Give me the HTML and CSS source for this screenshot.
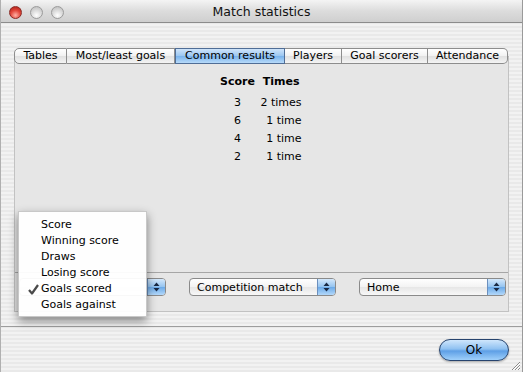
FILE: index.html
```html
<!DOCTYPE html>
<html lang="en">
<head>
    <meta charset="UTF-8">
    <title>Match statistics</title>
    <link rel="stylesheet" href="styles.css">
</head>
<body>
    <div class="window">
        <div class="titlebar">
            <div class="lights">
                <span class="light close"></span>
                <span class="light"></span>
                <span class="light"></span>
            </div>
            <div class="title">Match statistics</div>
        </div>

        <div class="content">
            <div class="tabs">
                <div class="tab" style="width:53px">Tables</div>
                <div class="tab" style="width:108px">Most/least goals</div>
                <div class="tab selected" style="width:110px">Common results</div>
                <div class="tab" style="width:57px">Players</div>
                <div class="tab" style="width:86px">Goal scorers</div>
                <div class="tab last" style="width:80px">Attendance</div>
            </div>

            <div class="pane">
                <div class="results">
                    <div class="grid">
                        <div class="head score">Score</div>
                        <div class="head times">Times</div>
                        <div class="score">3</div><div class="times">2 times</div>
                        <div class="score">6</div><div class="times">1 time</div>
                        <div class="score">4</div><div class="times">1 time</div>
                        <div class="score">2</div><div class="times">1 time</div>
                    </div>
                </div>
                <div class="filters">
                    <div class="popup"><span class="value covered">Goals scored</span><span class="arrows"><svg width="7" height="10" viewBox="0 0 7 10"><path d="M3.5 0.5 L6.5 4 L0.5 4 Z M0.5 6 L6.5 6 L3.5 9.5 Z" fill="#1a2a44"/></svg></span></div>
                    <div class="popup"><span class="value">Competition match</span><span class="arrows"><svg width="7" height="10" viewBox="0 0 7 10"><path d="M3.5 0.5 L6.5 4 L0.5 4 Z M0.5 6 L6.5 6 L3.5 9.5 Z" fill="#1a2a44"/></svg></span></div>
                    <div class="popup"><span class="value">Home</span><span class="arrows"><svg width="7" height="10" viewBox="0 0 7 10"><path d="M3.5 0.5 L6.5 4 L0.5 4 Z M0.5 6 L6.5 6 L3.5 9.5 Z" fill="#1a2a44"/></svg></span></div>
                </div>
            </div>
        </div>

        <div class="footer">
            <button class="ok">Ok</button>
            <svg class="grip" width="11" height="11" viewBox="0 0 11 11">
                <path d="M10 2 L2 10 M10 5 L5 10 M10 8 L8 10" stroke="#8a8a8a" stroke-width="1"/>
                <path d="M10 3 L3 10 M10 6 L6 10 M10 9 L9 10" stroke="#ffffff" stroke-width="1"/>
            </svg>
        </div>

        <div class="menu">
            <div class="item">Score</div>
            <div class="item">Winning score</div>
            <div class="item">Draws</div>
            <div class="item">Losing score</div>
            <div class="item checked">
                <svg class="check" width="11" height="11" viewBox="0 0 11 11"><path d="M1 6 L4 9.5 L10 1" fill="none" stroke="#4a4a4a" stroke-width="2.2" stroke-linejoin="round"/></svg>
                Goals scored
            </div>
            <div class="item">Goals against</div>
        </div>
    </div>
</body>
</html>
```

FILE: styles.css
```css
:root {
    --ui-font: "DejaVu Sans", "Liberation Sans", sans-serif;
    --pane-color: #e6e6e6;
    --line-color: #a6a6a6;
}

body {
    margin: 0;
    font-family: var(--ui-font);
    color: #000;
}

.window {
    position: relative;
    width: 523px;
    height: 372px;
    box-sizing: border-box;
    border-right: 1px solid #9a9a9a;
    border-left: 1px solid #b0b0b0;
    background: repeating-linear-gradient(to bottom, #f2f2f2 0, #f2f2f2 2px, #e9e9e9 2px, #e9e9e9 4px);
    display: flex;
    flex-direction: column;
    overflow: hidden;
}

.titlebar {
    height: 22px;
    border-bottom: 1px solid #8c8c8c;
    background: linear-gradient(to bottom, #f4f4f4 0%, #dcdcdc 50%, #cfcfcf 100%);
    border-radius: 5px 5px 0 0;
    position: relative;
    display: flex;
    align-items: center;
    justify-content: center;
}

.lights {
    position: absolute;
    left: 8px;
    top: 6px;
    display: flex;
    gap: 8px;
}

.light {
    width: 13px;
    height: 13px;
    border-radius: 50%;
    box-sizing: border-box;
    border: 1px solid #9b9b9b;
    background: radial-gradient(circle at 50% 75%, #ffffff 0%, #dedede 45%, #b8b8b8 100%);
}

.light.close {
    border-color: #8a2a25;
    background: radial-gradient(circle at 50% 75%, #ffb1a6 0%, #e2463a 50%, #a51b12 100%);
}

.title {
    font-size: 12.5px;
    color: #111;
    padding-top: 1px;
}

.content {
    padding: 25px 13px 0 13px;
}

.tabs {
    position: relative;
    z-index: 1;
    display: flex;
    height: 16px;
}

.tab {
    box-sizing: border-box;
    height: 16px;
    font-size: 11px;
    line-height: 14px;
    text-align: center;
    border: 1px solid #8d8d8d;
    border-left: none;
    background: linear-gradient(to bottom, #ffffff 0%, #f1f1f1 50%, #e0e0e0 51%, #f4f4f4 100%);
    white-space: nowrap;
}

.tab:first-child {
    border-left: 1px solid #8d8d8d;
    border-radius: 5px 0 0 5px;
}

.tab.last {
    border-radius: 0 5px 5px 0;
}

.tab.selected {
    background: linear-gradient(to bottom, #cfe4fa 0%, #9ac6f1 50%, #78b2ec 51%, #b7daf9 100%);
    border-color: #4f6d96;
    border-left: 1px solid #4f6d96;
}

.pane {
    margin-top: -8px;
    height: 256px;
    background: var(--pane-color);
    border: 1px solid #c2c2c2;
    border-top-color: #b0b0b0;
    box-sizing: border-box;
    display: flex;
    flex-direction: column;
}

.results {
    flex: 1;
    border-bottom: 1px solid var(--line-color);
    padding-top: 16px;
    display: flex;
    justify-content: center;
    align-items: flex-start;
}

.grid {
    display: grid;
    grid-template-columns: 40px 44px;
    font-size: 11px;
    line-height: 18px;
    margin-right: 4px;
}

.grid .head {
    font-weight: bold;
    margin-bottom: 3px;
}

.grid .score {
    text-align: center;
}

.grid .times {
    text-align: right;
}

.grid .head.times {
    padding-right: 2px;
}

.filters {
    height: 38px;
    box-sizing: border-box;
    padding: 5px 0 0 4px;
    display: flex;
    gap: 23px;
}

.popup {
    width: 147px;
    height: 18px;
    box-sizing: border-box;
    border: 1px solid #8a8a8a;
    border-radius: 4px;
    background: linear-gradient(to bottom, #ffffff 0%, #f3f3f3 50%, #e6e6e6 51%, #f8f8f8 100%);
    display: flex;
    align-items: center;
    font-size: 11px;
    overflow: hidden;
}

.popup .value {
    flex: 1;
    padding-left: 7px;
}

/* the open menu hides this one */
.popup .value.covered {
    visibility: hidden;
}

.popup .arrows {
    width: 17px;
    height: 100%;
    display: flex;
    align-items: center;
    justify-content: center;
    background: linear-gradient(to bottom, #d4e8fb 0%, #93c3f0 50%, #6aa9e8 51%, #b3d8fa 100%);
    border-left: 1px solid #6b8fbd;
}

.footer {
    flex: 1;
    margin-top: 14px;
    border-top: 1px solid #9d9d9d;
    display: flex;
    justify-content: flex-end;
    align-items: flex-start;
    padding: 12px 13px 0 0;
    position: relative;
}

.ok {
    width: 70px;
    height: 22px;
    border: 1px solid #27446e;
    border-radius: 11px;
    background: linear-gradient(to bottom, #cfe6fc 0%, #8fc1f1 45%, #5e9fe6 55%, #9fd0fb 100%);
    font-family: var(--ui-font);
    font-size: 12px;
    color: #000;
    padding: 0;
    box-shadow: 0 1px 2px rgba(0, 0, 0, 0.3);
}

.grip {
    position: absolute;
    right: 1px;
    bottom: 1px;
}

.menu {
    position: absolute;
    left: 17px;
    top: 211px;
    width: 127px;
    padding: 5px 0 3px 0;
    background: rgba(255, 255, 255, 0.94);
    border: 1px solid #c8c8c8;
    box-shadow: 0 4px 9px rgba(0, 0, 0, 0.45);
}

.menu .item {
    position: relative;
    height: 16px;
    line-height: 16px;
    font-size: 11px;
    padding-left: 22px;
    white-space: nowrap;
}

.menu .check {
    position: absolute;
    left: 9px;
    top: 3px;
}
```
